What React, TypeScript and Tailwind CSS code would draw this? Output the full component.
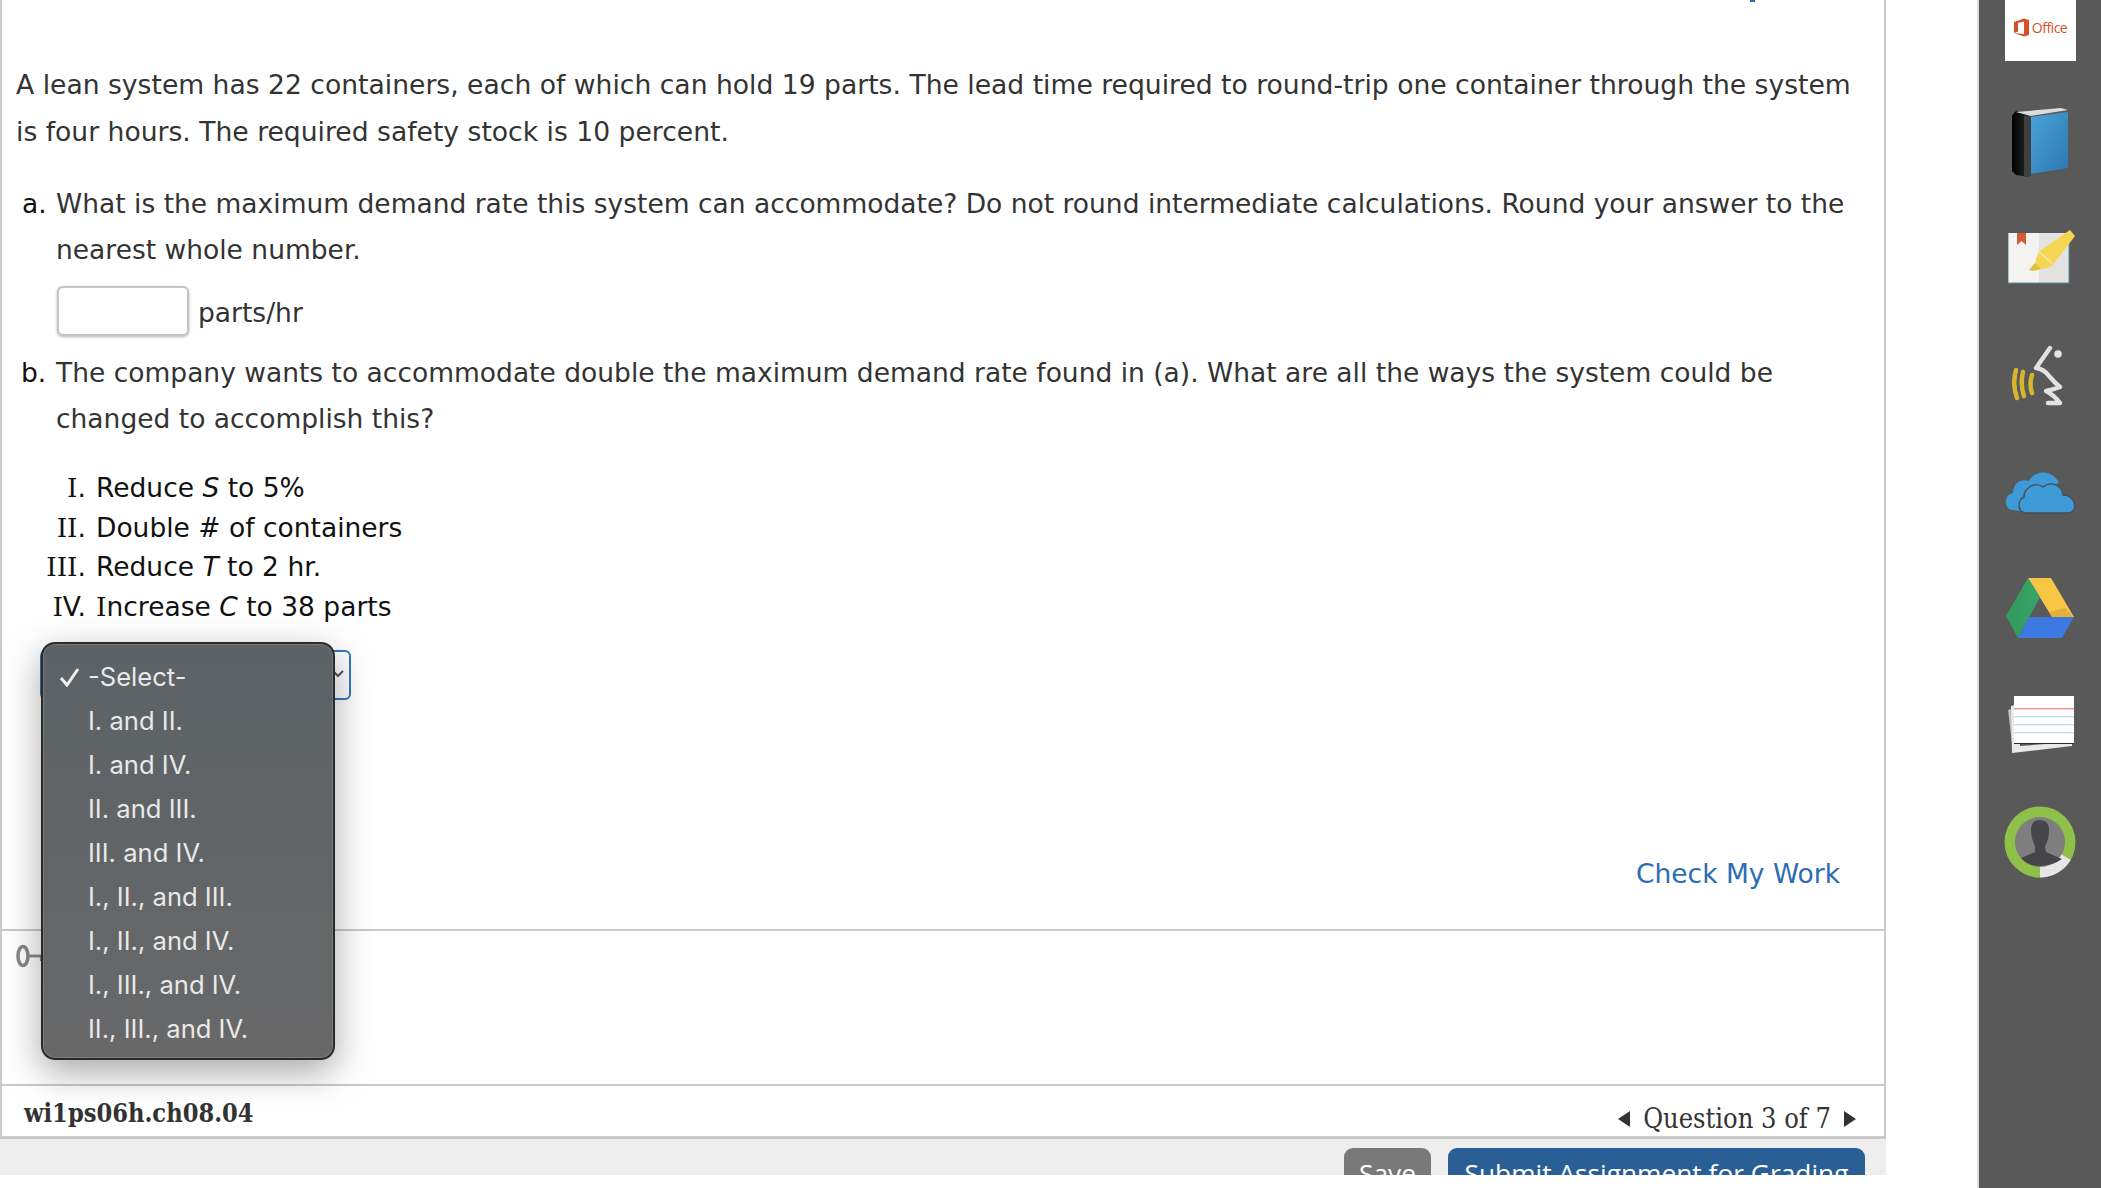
import React from "react";

const verdana = "font-['DejaVu_Sans','Liberation_Sans',sans-serif]";
const serif = "font-['DejaVu_Serif','Liberation_Serif',serif] [font-stretch:condensed]";

function Ic() {
  return <span className="font-['DejaVu_Serif',serif]">I</span>;
}

function OfficeIcon() {
  return (
    <svg width="17" height="19" viewBox="0 0 17 19" className="shrink-0">
      <path d="M1 4 L11 0.5 L16 2 V17 L11 18.5 L1 15 L11 16 V3.5 L5 5 V13.5 L1 15 Z" fill="#d6512a" />
    </svg>
  );
}

function BookIcon() {
  return (
    <svg width="58" height="70" viewBox="0 0 58 70">
      <defs>
        <linearGradient id="bk1" x1="0" x2="1" y1="0" y2="1">
          <stop offset="0" stopColor="#4ba3d8" />
          <stop offset="1" stopColor="#2b78b0" />
        </linearGradient>
        <linearGradient id="bk2" x1="0" x2="1" y1="0" y2="0">
          <stop offset="0" stopColor="#000" />
          <stop offset="0.7" stopColor="#1c1c1c" />
          <stop offset="1" stopColor="#3d3d3d" />
        </linearGradient>
      </defs>
      <path d="M3 5 L5 3 L18 7 V69 L5 67 L1 63 V8 Z" fill="url(#bk2)" />
      <rect x="13" y="8" width="7" height="60" fill="#3f3f3f" />
      <path d="M5 4 L50 0 L57 2 L20 8 Z" fill="#d7dde0" />
      <path d="M20 9 L57 4 V60 L20 66 Z" fill="url(#bk1)" />
    </svg>
  );
}

function HighlightIcon() {
  return (
    <svg width="68" height="56" viewBox="0 0 68 56">
      <rect x="0" y="3" width="31" height="50" fill="#f4f3f1" />
      <rect x="31" y="3" width="30" height="50" fill="#e3e3e1" />
      <path d="M0 3 V53 H61 V3" fill="none" stroke="#5b8ea3" strokeWidth="1" />
      <path d="M9 3 H18 V15 L13.5 11 L9 15 Z" fill="#cf5d35" />
      <path d="M62 0 L67 6 L44 36 Q36 40 28 38 Q26 28 32 21 Z" fill="#f5d552" />
      <path d="M30 21 L45 34" stroke="#efe7b8" strokeWidth="1.6" fill="none" />
      <path d="M27 33 L33 39 L25 41 L21 40 Z" fill="#e0bf3d" />
    </svg>
  );
}

function SpeakIcon() {
  return (
    <svg width="56" height="64" viewBox="0 0 56 64" fill="none">
      <path d="M4 25 Q0 39 5 53" stroke="#d8b52e" strokeWidth="4.5" strokeLinecap="round" />
      <path d="M11 27 Q8 39 12 51" stroke="#d8b52e" strokeWidth="4.5" strokeLinecap="round" />
      <path d="M20 30 Q17 39 20 48" stroke="#d8b52e" strokeWidth="4.5" strokeLinecap="round" />
      <path d="M38 3 L24 23 Q32 24 37 31 Q43 38 48 42 Q40 45 34 46 Q42 50 48 58 H36" stroke="#e2e2e2" strokeWidth="4.4" strokeLinejoin="round" strokeLinecap="round" />
      <circle cx="46" cy="9" r="3.8" fill="#e2e2e2" />
    </svg>
  );
}

function CloudIcon() {
  return (
    <svg width="72" height="44" viewBox="0 0 72 44">
      <path d="M8 40 C-1 40 -2 25 8 23 C8 14 15 8 24 11 C28 2 44 -3 54 12 L40 26 L16 41 Z" fill="#3f9bd8" />
      <path d="M22 43 C12 43 12 30 19 27 C19 18 30 11 38 17 C45 11 57 14 58 25 C70 24 75 43 62 43 Z" fill="#3f9bd8" stroke="#4a4f53" strokeWidth="1.4" />
    </svg>
  );
}

function DriveIcon() {
  return (
    <svg width="70" height="60" viewBox="0 0 70 60">
      <defs>
        <linearGradient id="dr1" x1="0" x2="1" y1="0" y2="0">
          <stop offset="0" stopColor="#2f9a5c" />
          <stop offset="1" stopColor="#3aa468" />
        </linearGradient>
      </defs>
      <path d="M23 0 H46 L69 39 H47 Z" fill="#f6c644" />
      <path d="M47 39 H69 L60 30 L44 34 Z" fill="#e4b03a" />
      <path d="M23 0 L35 19 L13 60 L1 38 Z" fill="url(#dr1)" />
      <path d="M24 39 H69 L57 60 H13 Z" fill="#3b78e0" />
    </svg>
  );
}

function CardsIcon() {
  return (
    <svg width="68" height="58" viewBox="0 0 68 58">
      <path d="M2 14 L8 12 L12 47 L6 48 Z" fill="#bdbdbd" />
      <path d="M5 10 L12 8 L14 50 L66 46 V50 L6 57 Z" fill="#e9e9e9" />
      <rect x="8" y="0" width="60" height="47" fill="#fff" />
      <rect x="8" y="12" width="60" height="1.4" fill="#ef8f8f" />
      <rect x="8" y="20" width="60" height="1.4" fill="#c7def0" />
      <rect x="8" y="28" width="60" height="1.4" fill="#c7def0" />
      <rect x="8" y="36" width="60" height="1.4" fill="#c7def0" />
      <rect x="8" y="47" width="60" height="1" fill="#2c2c2c" />
    </svg>
  );
}

function AvatarIcon() {
  return (
    <svg width="72" height="72" viewBox="0 0 72 72">
      <circle cx="36" cy="36" r="30" fill="none" stroke="#8fc04a" strokeWidth="11" />
      <path d="M36 66 A30 30 0 0 0 62 51" fill="none" stroke="#e6e6e6" strokeWidth="11" />
      <circle cx="36" cy="36" r="25" fill="#7e7e80" />
      <path d="M27 22 Q28 14 36 14 Q45 14 45 24 Q45 34 41 40 L42 46 L58 53 Q48 60 36 60 Q24 60 17 52 L31 46 L31 40 Q27 33 27 22 Z" fill="#464648" />
    </svg>
  );
}

function KeyIcon() {
  return (
    <svg width="34" height="26" viewBox="0 0 34 26" fill="none">
      <ellipse cx="8" cy="13" rx="5" ry="9.5" stroke="#8a8a8a" strokeWidth="3.6" />
      <path d="M14 13 H34" stroke="#8a8a8a" strokeWidth="2.8" />
      <path d="M26 13 V18 M31 13 V17" stroke="#8a8a8a" strokeWidth="2.2" />
    </svg>
  );
}

const options = [
  "I. and II.",
  "I. and IV.",
  "II. and III.",
  "III. and IV.",
  "I., II., and III.",
  "I., II., and IV.",
  "I., III., and IV.",
  "II., III., and IV.",
];

const roman: [React.ReactNode, React.ReactNode][] = [
  [<><Ic />.</>, <>Reduce <i>S</i> to 5%</>],
  [<><Ic /><Ic />.</>, <>Double # of containers</>],
  [<><Ic /><Ic /><Ic />.</>, <>Reduce <i>T</i> to 2 hr.</>],
  [<><Ic />V.</>, <><Ic />ncrease <i>C</i> to 38 parts</>],
];

export default function App() {
  return (
    <div className="flex h-[1188px] w-[2101px] overflow-hidden bg-white">
      <div className="flex h-[1175px] w-[1886px] shrink-0 flex-col overflow-hidden">
        <div className="flex h-[1139px] shrink-0 flex-col border-x-2 border-b-[3px] border-[#c9c9c9] bg-white">
          <div className={`flex h-[929px] shrink-0 flex-col text-[26.5px] text-[#333] ${verdana}`}>
            <div className="flex h-[2px] justify-end pr-[129px]">
              <div className="h-[2px] w-[5px] bg-[#2b6cb5]" />
            </div>
            <p className="mt-[59px] pl-[14px] pr-[28px] text-[26.6px] leading-[47px]">
              A lean system has 22 containers, each of which can hold 19 parts. The lead time required to round-trip one container through the system is four hours. The required safety stock is 10 percent.
            </p>
            <div className="mt-[26px] flex leading-[45.5px]">
              <span className="w-[54px] pl-[20px] text-[#111]">a.</span>
              <p className="flex-1 pr-[20px]">
                What is the maximum demand rate this system can accommodate? Do not round intermediate calculations. Round your answer to the nearest whole number.
              </p>
            </div>
            <div className="mt-[14px] flex h-[50px] items-center pl-[55px]">
              <div className="h-[50px] w-[132px] shrink-0 rounded-[6px] border-2 border-[#c4c4c4] bg-white shadow-[0_1px_3px_rgba(0,0,0,0.3)]" />
              <span className="ml-[9px] pt-[3px] leading-[50px]">parts/hr</span>
            </div>
            <div className="mt-[14px] flex leading-[45.5px]">
              <span className="w-[54px] pl-[19px] text-[#111]">b.</span>
              <p className="flex-1 pr-[60px]">
                The company wants to accommodate double the maximum demand rate found in (a). What are all the ways the system could be changed to accomplish this?
              </p>
            </div>
            <div className="mt-[27px] flex flex-col leading-[39.7px] text-[#111]">
              {roman.map(([n, t], i) => (
                <div key={i} className="flex">
                  <span className="w-[84px] shrink-0 text-right">{n}</span>
                  <span className="ml-[10px]">{t}</span>
                </div>
              ))}
            </div>
            <div className="relative mt-[23px] ml-[38px] h-[50px] w-[311px] rounded-[6px] border-2 border-[#2f7bc4] bg-white">
              <svg width="12" height="8" viewBox="0 0 12 8" className="absolute right-[5px] top-[18px]" fill="none">
                <path d="M1 1 L6 6 L11 1" stroke="#555" strokeWidth="2" />
              </svg>
              <div className="absolute left-[-1px] top-[-10px] z-10 flex h-[418px] w-[294px] flex-col rounded-[14px] border-2 border-[#2a2a2a] bg-gradient-to-b from-[#5c6266] to-[#686869] pt-[11px] font-['Inter',sans-serif] text-[25.6px] text-[#e9e9e9] shadow-[0_12px_36px_rgba(0,0,0,0.35),inset_0_0_0_1px_rgba(255,255,255,0.14)]">
                <div className="flex h-[44px] items-center">
                  <svg width="22" height="20" viewBox="0 0 22 20" className="ml-[16px] mr-[7px]" fill="none">
                    <path d="M2 11 L8 18 L19 2" stroke="#eeeeee" strokeWidth="3" />
                  </svg>
                  <span>-Select-</span>
                </div>
                {options.map((o) => (
                  <div key={o} className="flex h-[44px] items-center pl-[45px]">{o}</div>
                ))}
              </div>
            </div>
            <div className="mt-[154px] flex justify-end pr-[44px] leading-[40px] text-[#2b6cb5]">Check My Work</div>
          </div>
          <div className="flex h-[157px] shrink-0 flex-col border-y-2 border-[#c9c9c9] pl-[13px] pt-[12px]">
            <KeyIcon />
          </div>
          <div className={`flex h-[50px] shrink-0 items-start justify-between pl-[22px] pr-[28px] text-[#333] ${serif}`}>
            <span className="mt-[8px] text-[25.2px] font-bold leading-[38px]">wi1ps06h.ch08.04</span>
            <div className="mt-[13px] flex items-center text-[27px] leading-[40px]">
              <svg width="12" height="16" viewBox="0 0 12 16"><path d="M12 0 V16 L0 8 Z" fill="#333" /></svg>
              <span className="mx-[13px]">Question 3 of 7</span>
              <svg width="12" height="16" viewBox="0 0 12 16"><path d="M0 0 V16 L12 8 Z" fill="#333" /></svg>
            </div>
          </div>
        </div>
        <div className="flex h-[36px] shrink-0 justify-end gap-[17px] overflow-hidden bg-[#eeeeee] pr-[21px] pt-[9px] font-['Open_Sans',sans-serif] text-[26.3px] text-white">
          <div className="h-[60px] w-[87px] rounded-[9px] bg-[#797979] text-center leading-[50px]">Save</div>
          <div className="h-[60px] w-[417px] rounded-[9px] bg-[#2a5f96] text-center leading-[50px]">Submit Assignment for Grading</div>
        </div>
      </div>
      <div className="ml-[91px] flex h-full w-[124px] shrink-0 flex-col items-center border-l-[2px] border-[#dcdcdc] bg-[#595959]">
        <div className="flex h-[61px] w-[71px] shrink-0 items-center justify-center gap-[2px] bg-white pb-[6px] font-['Open_Sans',sans-serif] text-[14px] tracking-[-0.5px] text-[#d6512a]">
          <OfficeIcon />
          <span>Office</span>
        </div>
        <div className="mt-[47px]"><BookIcon /></div>
        <div className="ml-[3px] mt-[52px]"><HighlightIcon /></div>
        <div className="mt-[59px]"><SpeakIcon /></div>
        <div className="ml-[2px] mt-[61px]"><CloudIcon /></div>
        <div className="mt-[64px]"><DriveIcon /></div>
        <div className="mt-[58px]"><CardsIcon /></div>
        <div className="mt-[52px]"><AvatarIcon /></div>
      </div>
    </div>
  );
}
